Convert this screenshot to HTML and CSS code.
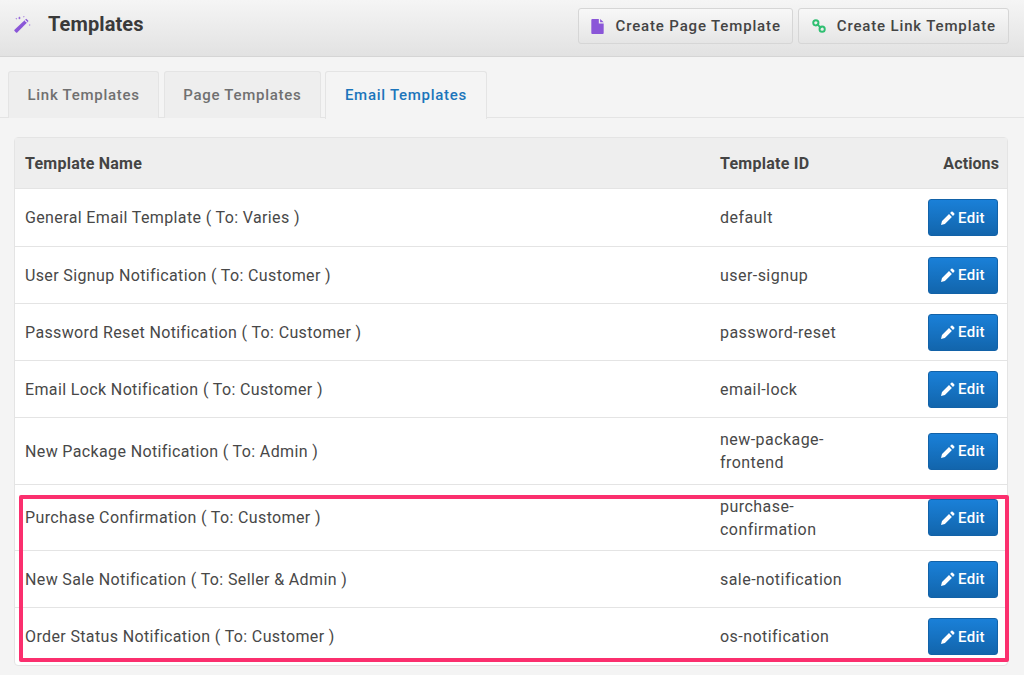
FILE: index.html
```html
<!DOCTYPE html>
<html lang="en">
<head>
<meta charset="utf-8">
<title>Templates</title>
<link rel="stylesheet" href="styles.css">
</head>
<body>
<header class="topbar">
  <div class="title">
    <svg class="wand" viewBox="0 0 20 20" width="18" height="18"><path fill="#8a56d8" d="M.6 16.400 13.600 4.200l2.600 2.600L3.600 19.400a1 1 0 0 1-1.400 0L.6 17.800a1 1 0 0 1 0-1.400z"/><path fill="#f0eef4" d="m11.600 6.100.9-.8 2.300 2.300-.9.9z"/><path fill="#8a56d8" d="M6 1.500l.5 1.300 1.300.5-1.300.5L6 5.100l-.5-1.300-1.300-.5 1.300-.5zM2.500 3l.3.8.8.3-.8.3-.3.8-.3-.8-.8-.3.8-.3zM17.500 10l.3.8.8.3-.8.3-.3.8-.3-.8-.8-.3.8-.3zM11 1l.3.7.7.3-.7.3-.3.7-.3-.7-.7-.3.7-.3z"/></svg>
    <h1>Templates</h1>
  </div>
  <div class="actions">
    <button class="tool page-btn"><svg viewBox="0 0 14 17" width="13" height="15"><path fill="#8a56d8" d="M1 0h7.500v5H14v11a1 1 0 0 1-1 1H1a1 1 0 0 1-1-1V1a1 1 0 0 1 1-1zM10 0l4 3.600H10z"/></svg><span>Create Page Template</span></button>
    <button class="tool link-btn"><svg viewBox="0 0 16 16" width="14" height="14"><g fill="none" stroke="#2fbf71" stroke-width="2.200"><circle cx="4.400" cy="4.400" r="3"/><circle cx="11.600" cy="11.600" r="3"/><path d="M5.500 5.500l5 5"/></g></svg><span>Create Link Template</span></button>
  </div>
</header>
<nav class="tabs">
  <a class="tab">Link Templates</a>
  <a class="tab">Page Templates</a>
  <a class="tab active">Email Templates</a>
</nav>
<main class="panel">
  <table class="grid">
    <thead>
      <tr><th class="c-name">Template Name</th><th class="c-id">Template ID</th><th class="c-act">Actions</th></tr>
    </thead>
    <tbody>
      <tr class="r58"><td>General Email Template ( To: Varies )</td><td class="c-id">default</td><td class="c-act"><button class="edit"><svg class="pen" viewBox="0 0 14 14" width="14" height="14"><path fill="#fff" d="M10.300.8a1 1 0 0 1 1.400 0l1.500 1.500a1 1 0 0 1 0 1.400l-1.200 1.200-2.900-2.900zM8 3.100 10.900 6l-7 7L0 14l1-3.900z"/></svg>Edit</button></td></tr>
      <tr class="r57"><td>User Signup Notification ( To: Customer )</td><td class="c-id">user-signup</td><td class="c-act"><button class="edit"><svg class="pen" viewBox="0 0 14 14" width="14" height="14"><path fill="#fff" d="M10.300.8a1 1 0 0 1 1.400 0l1.500 1.500a1 1 0 0 1 0 1.400l-1.200 1.200-2.900-2.900zM8 3.100 10.900 6l-7 7L0 14l1-3.900z"/></svg>Edit</button></td></tr>
      <tr class="r57"><td>Password Reset Notification ( To: Customer )</td><td class="c-id">password-reset</td><td class="c-act"><button class="edit"><svg class="pen" viewBox="0 0 14 14" width="14" height="14"><path fill="#fff" d="M10.300.8a1 1 0 0 1 1.400 0l1.500 1.500a1 1 0 0 1 0 1.400l-1.200 1.200-2.900-2.900zM8 3.100 10.900 6l-7 7L0 14l1-3.900z"/></svg>Edit</button></td></tr>
      <tr class="r57"><td>Email Lock Notification ( To: Customer )</td><td class="c-id">email-lock</td><td class="c-act"><button class="edit"><svg class="pen" viewBox="0 0 14 14" width="14" height="14"><path fill="#fff" d="M10.300.8a1 1 0 0 1 1.400 0l1.500 1.500a1 1 0 0 1 0 1.400l-1.200 1.200-2.900-2.900zM8 3.100 10.900 6l-7 7L0 14l1-3.900z"/></svg>Edit</button></td></tr>
      <tr class="r67"><td>New Package Notification ( To: Admin )</td><td class="c-id">new-package-<br>frontend</td><td class="c-act"><button class="edit"><svg class="pen" viewBox="0 0 14 14" width="14" height="14"><path fill="#fff" d="M10.300.8a1 1 0 0 1 1.400 0l1.500 1.500a1 1 0 0 1 0 1.400l-1.200 1.200-2.900-2.900zM8 3.100 10.900 6l-7 7L0 14l1-3.900z"/></svg>Edit</button></td></tr>
      <tr class="r66"><td>Purchase Confirmation ( To: Customer )</td><td class="c-id">purchase-<br>confirmation</td><td class="c-act"><button class="edit"><svg class="pen" viewBox="0 0 14 14" width="14" height="14"><path fill="#fff" d="M10.300.8a1 1 0 0 1 1.400 0l1.500 1.500a1 1 0 0 1 0 1.400l-1.200 1.200-2.900-2.900zM8 3.100 10.900 6l-7 7L0 14l1-3.900z"/></svg>Edit</button></td></tr>
      <tr class="r57"><td>New Sale Notification ( To: Seller &amp; Admin )</td><td class="c-id">sale-notification</td><td class="c-act"><button class="edit"><svg class="pen" viewBox="0 0 14 14" width="14" height="14"><path fill="#fff" d="M10.300.8a1 1 0 0 1 1.400 0l1.500 1.500a1 1 0 0 1 0 1.400l-1.200 1.200-2.900-2.900zM8 3.100 10.900 6l-7 7L0 14l1-3.900z"/></svg>Edit</button></td></tr>
      <tr class="r57 last"><td>Order Status Notification ( To: Customer )</td><td class="c-id">os-notification</td><td class="c-act"><button class="edit"><svg class="pen" viewBox="0 0 14 14" width="14" height="14"><path fill="#fff" d="M10.300.8a1 1 0 0 1 1.400 0l1.500 1.500a1 1 0 0 1 0 1.400l-1.200 1.200-2.900-2.900zM8 3.100 10.900 6l-7 7L0 14l1-3.900z"/></svg>Edit</button></td></tr>
    </tbody>
  </table>
</main>
<div class="highlight"></div>
</body>
</html>
```

FILE: styles.css
```css
* { box-sizing: border-box; }
html, body { margin: 0; height: 675px; overflow: hidden; }
body {
  background: #f4f4f4;
  font-family: Roboto, "Open Sans", sans-serif;
  color: #484848;
  font-size: 16px;
  letter-spacing: .37px;
  position: relative;
}
.topbar {
  height: 57px;
  display: flex;
  justify-content: space-between;
  align-items: flex-start;
  padding: 8px 15px 0 14px;
  background: linear-gradient(#f5f5f5, #e2e2e2);
  border-bottom: 1px solid #d5d5d5;
}
.title { display: flex; align-items: center; height: 32px; }
.wand { margin-right: 16px; }
h1 { margin: 0; font-size: 20px; font-weight: 700; color: #3a3a3a; letter-spacing: .1px; }
.actions { display: flex; gap: 5px; }
.tool {
  height: 36px;
  display: flex;
  align-items: center;
  border: 1px solid #d6d6d6;
  border-radius: 3px;
  background: linear-gradient(#f8f8f8, #e5e5e5);
  font: 500 15px Roboto, sans-serif;
  letter-spacing: .85px;
  color: #444;
  padding: 0 12px 0 13px;
}
.page-btn { padding: 0 11px 0 12px; }
.page-btn svg { margin-right: 12px; }
.link-btn svg { margin-right: 11px; }
.tabs {
  height: 61px;
  padding: 14px 0 0 8px;
  display: flex;
  gap: 4.5px;
  border-bottom: 1px solid #e4e4e4;
}
.tab {
  height: 47px;
  display: flex;
  align-items: center;
  padding: 0 18.5px;
  background: #eeeeee;
  border: 1px solid #e4e4e4;
  border-bottom: 0;
  border-radius: 3px 3px 0 0;
  font-size: 15px;
  font-weight: 500;
  letter-spacing: .72px;
  color: #707070;
}
.tab.active {
  background: #f4f4f4;
  color: #1b75bb;
  height: 48px;
  padding-bottom: 1px;
}
.panel { padding: 19px 16px 0 14px; }
.grid {
  width: 100%;
  table-layout: fixed;
  border-collapse: separate;
  border-spacing: 0;
  background: #fff;
  border: 1px solid #e4e4e4;
  border-radius: 4px;
}
th {
  height: 51px;
  background: #eeeeee;
  text-align: left;
  font-weight: 700;
  font-size: 16px;
  letter-spacing: .25px;
  color: #444;
  padding: 0 10px;
  border-bottom: 1px solid #e4e4e4;
}
td {
  padding: 0 10px;
  line-height: 23px;
  border-bottom: 1px solid #e4e4e4;
  vertical-align: middle;
}
.c-name { width: 695px; }
.c-id { width: 189px; }
td.c-id { letter-spacing: .45px; }
td.c-act { text-align: right; padding-right: 9px; }
th.c-act { text-align: right; padding-right: 8px; letter-spacing: .1px; }
.r57 { height: 57px; }
.r58 { height: 58px; }
.r66 { height: 66px; }
.r67 { height: 67px; }
.last td { border-bottom: 0; }
.edit {
  display: inline-flex;
  align-items: center;
  justify-content: center;
  vertical-align: middle;
  width: 70px;
  height: 37px;
  background: linear-gradient(#1a80d8, #1265ac);
  border: 1px solid #1262a8;
  border-radius: 3px;
  color: #fff;
  font: 500 15px Roboto, sans-serif;
  letter-spacing: .3px;
  padding: 0;
}
.pen { margin-right: 3px; }
.highlight {
  position: absolute;
  left: 19px;
  top: 495px;
  width: 990px;
  height: 167px;
  border: 4px solid #fb2f6e;
  border-radius: 2px;
}
```
